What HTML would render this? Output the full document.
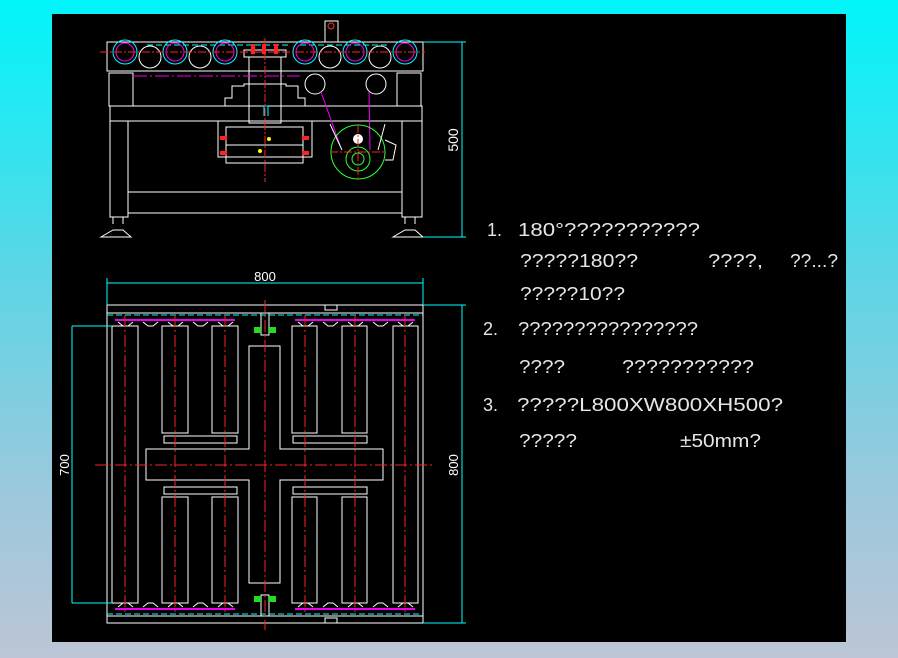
<!DOCTYPE html>
<html><head><meta charset="utf-8"><style>
html,body{margin:0;padding:0;width:898px;height:658px;overflow:hidden;background:linear-gradient(#00f6fa 0%,#5ad6e6 40%,#9cc8dc 75%,#bcc6d6 100%);}
svg{position:absolute;left:0;top:0}
text{font-family:"Liberation Sans",sans-serif;fill:#fff}
.n text{fill:#e6e6e6}
</style></head><body>
<svg width="898" height="658" viewBox="0 0 898 658">
<rect x="52" y="14" width="794" height="628" fill="#000"/>
<g fill="none" stroke="#fff" stroke-width="1">
<rect x="107" y="42" width="316" height="29"/>
<rect x="325" y="21" width="13" height="21"/>
<circle cx="331" cy="26" r="3" stroke="#f33"/>
<rect x="109" y="73" width="24" height="33"/>
<rect x="397" y="73" width="24" height="33"/>
<rect x="110" y="106" width="312" height="15"/>
<rect x="110" y="121" width="18" height="96"/>
<rect x="402" y="121" width="20" height="96"/>
<rect x="128" y="192" width="274" height="21"/>
<rect x="244" y="50" width="42" height="7"/>
<rect x="249" y="57" width="32" height="66"/>
<path d="M225 106V98H232V86H244V84H286V86H298V98H305V106"/>
<rect x="218" y="121" width="94" height="36"/>
<rect x="226" y="127" width="77" height="36"/>
<line x1="226" y1="145" x2="303" y2="145"/>
<path d="M113 217V224M123 217V224M101 237L113 230H123L131 237Z M405 217V224M415 217V224M393 237L405 230H415L423 237Z"/>
</g>
<g fill="none" stroke="#0ff" stroke-width="1">
<path d="M147 45H290M300 45H390" stroke-dasharray="6 3"/>
<path d="M264 116V106H268V116" />
<path d="M423 42H466M423 237H466M462 42V237"/>
<circle cx="125" cy="52" r="12"/><circle cx="175" cy="52" r="12"/><circle cx="225" cy="52" r="12"/>
<circle cx="305" cy="52" r="12"/><circle cx="355" cy="52" r="12"/><circle cx="405" cy="52" r="12"/>
</g>
<g fill="none" stroke="#fff">
<circle cx="150" cy="57" r="11"/><circle cx="200" cy="57" r="11"/><circle cx="330" cy="57" r="11"/><circle cx="380" cy="57" r="11"/>
<circle cx="315" cy="84" r="10"/><circle cx="376" cy="84" r="10"/>
</g>
<g fill="none" stroke="#e0e" stroke-width="1">
<circle cx="125" cy="52" r="9"/><circle cx="175" cy="52" r="9"/><circle cx="225" cy="52" r="9"/>
<circle cx="305" cy="52" r="9"/><circle cx="355" cy="52" r="9"/><circle cx="405" cy="52" r="9"/>
<path d="M133 76H300" stroke-dasharray="14 3 2 3"/>
<path d="M321 92L340 145M369 92L370 150"/>
</g>
<circle cx="358" cy="152" r="27" fill="none" stroke="#3f3"/>
<circle cx="358" cy="159" r="12" fill="none" stroke="#3f3"/>
<circle cx="358" cy="159" r="6" fill="none" stroke="#3f3"/>
<circle cx="358" cy="139" r="5" fill="#fff"/>
<path d="M330 124L342 150M385 124L378 150M385 140L396 145L393 160L385 160" fill="none" stroke="#fff"/>
<g stroke="#f22" stroke-width="1" stroke-dasharray="8 2 2 2">
<line x1="265" y1="38" x2="265" y2="182"/>
<line x1="100" y1="52" x2="425" y2="52"/>
<line x1="330" y1="152" x2="385" y2="152"/>
<line x1="358" y1="125" x2="358" y2="180"/>
</g>
<g fill="#f22"><rect x="251" y="44" width="4" height="10"/><rect x="262" y="44" width="4" height="10"/><rect x="274" y="44" width="4" height="10"/>
<rect x="220" y="136" width="7" height="4"/><rect x="220" y="151" width="7" height="4"/><rect x="302" y="136" width="7" height="4"/><rect x="302" y="151" width="7" height="4"/></g>
<circle cx="269" cy="139" r="2" fill="#ff0"/><circle cx="260" cy="151" r="2" fill="#ff0"/>
<text x="0" y="0" font-size="14" transform="translate(458,140) rotate(-90)" text-anchor="middle">500</text>

<g fill="none" stroke="#fff">
<rect x="107" y="305" width="316" height="318"/>
<line x1="107" y1="313" x2="423" y2="313"/><line x1="107" y1="616" x2="423" y2="616"/>
<rect x="325" y="305" width="12" height="5"/><rect x="325" y="618" width="12" height="5"/>
<rect x="112" y="326" width="26" height="277"/><rect x="393" y="326" width="25" height="277"/>
<rect x="162" y="326" width="26" height="107"/><rect x="212" y="326" width="26" height="107"/>
<rect x="292" y="326" width="25" height="107"/><rect x="342" y="326" width="25" height="107"/>
<rect x="162" y="497" width="26" height="106"/><rect x="212" y="497" width="26" height="106"/>
<rect x="292" y="497" width="25" height="106"/><rect x="342" y="497" width="25" height="106"/>
<rect x="164" y="436" width="73" height="7"/><rect x="293" y="436" width="74" height="7"/>
<rect x="164" y="487" width="73" height="7"/><rect x="293" y="487" width="74" height="7"/>
<path d="M249 346H280V449H383V480H280V583H249V480H146V449H249Z"/>
<path d="M261 313V335H269V313M261 616V595H269V616"/>
</g>
<g fill="none" stroke="#e0e" stroke-width="2">
<path d="M115 320H235M295 320H415M115 609H235M295 609H415"/>
</g>
<g fill="none" stroke="#fff" stroke-width="1">
<path d="M118 322L123 326H128L133 322M143 322L148 326H153L158 322M168 322L173 326H178L183 322M193 322L198 326H203L208 322M218 322L223 326H228L233 322M298 322L303 326H308L313 322M323 322L328 326H333L338 322M348 322L353 326H358L363 322M373 322L378 326H383L388 322M398 322L403 326H408L413 322"/>
<path d="M118 607L123 603H128L133 607M143 607L148 603H153L158 607M168 607L173 603H178L183 607M193 607L198 603H203L208 607M218 607L223 603H228L233 607M298 607L303 603H308L313 607M323 607L328 603H333L338 607M348 607L353 603H358L363 607M373 607L378 603H383L388 607M398 607L403 603H408L413 607"/>
</g>
<g fill="#2d2"><rect x="254" y="327" width="7" height="6"/><rect x="269" y="327" width="7" height="6"/><rect x="254" y="596" width="7" height="6"/><rect x="269" y="596" width="7" height="6"/></g>
<g fill="none" stroke="#0ff">
<path d="M107 315H423M107 614H423" stroke-dasharray="6 3"/>
<path d="M107 278V305M423 278V305M107 283H423"/>
<path d="M423 305H466M423 623H466M462 305V623"/>
<path d="M72 326H112M72 603H112M72 326V603"/>
</g>
<g stroke="#f22" stroke-dasharray="12 3 2 3">
<line x1="265" y1="300" x2="265" y2="630"/>
<line x1="95" y1="465" x2="435" y2="465"/>
<line x1="125" y1="315" x2="125" y2="612"/><line x1="405" y1="315" x2="405" y2="612"/>
<line x1="175" y1="315" x2="175" y2="612"/><line x1="225" y1="315" x2="225" y2="612"/>
<line x1="305" y1="315" x2="305" y2="612"/><line x1="355" y1="315" x2="355" y2="612"/>
</g>
<text x="265" y="281" font-size="13" text-anchor="middle">800</text>
<text font-size="13" transform="translate(458,465) rotate(-90)" text-anchor="middle">800</text>
<text font-size="13" transform="translate(69,465) rotate(-90)" text-anchor="middle">700</text>

<g font-size="18" class="n">
<text x="487" y="236">1.</text><text x="518" y="236" textLength="182" lengthAdjust="spacingAndGlyphs">180°???????????</text>
<text x="520" y="267" textLength="118" lengthAdjust="spacingAndGlyphs">?????180??</text>
<text x="708" y="267" textLength="55" lengthAdjust="spacingAndGlyphs">????,</text>
<text x="790" y="267" textLength="48" lengthAdjust="spacingAndGlyphs">??...?</text>
<text x="520" y="300" textLength="105" lengthAdjust="spacingAndGlyphs">?????10??</text>
<text x="483" y="335">2.</text><text x="518" y="335" textLength="180" lengthAdjust="spacingAndGlyphs">????????????????</text>
<text x="519" y="373" textLength="46" lengthAdjust="spacingAndGlyphs">????</text>
<text x="622" y="373" textLength="132" lengthAdjust="spacingAndGlyphs">???????????</text>
<text x="483" y="411">3.</text><text x="517" y="411" textLength="266" lengthAdjust="spacingAndGlyphs">?????L800XW800XH500?</text>
<text x="519" y="447" textLength="58" lengthAdjust="spacingAndGlyphs">?????</text>
<text x="680" y="447" textLength="81" lengthAdjust="spacingAndGlyphs">±50mm?</text>
</g>
</svg>
</body></html>
